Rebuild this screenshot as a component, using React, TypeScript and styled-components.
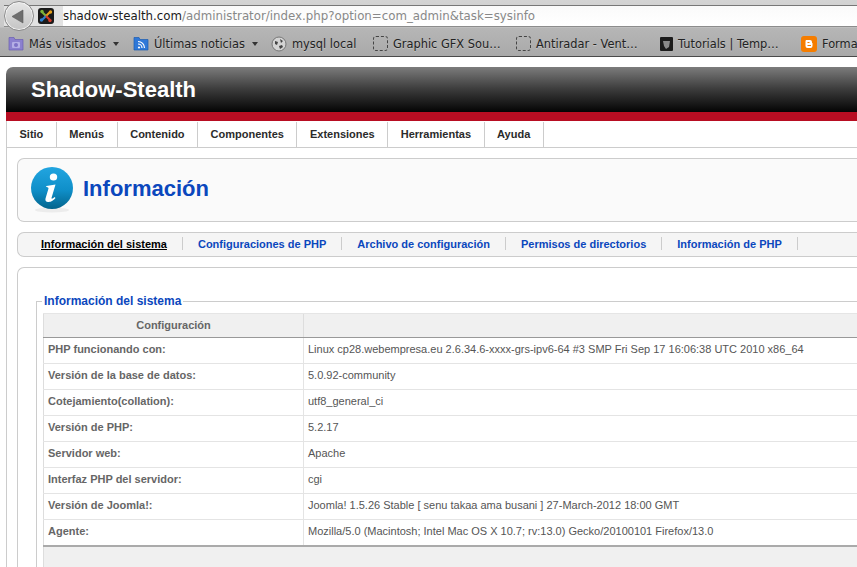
import React from 'react';
import styled, { createGlobalStyle } from 'styled-components';

const GlobalStyle = createGlobalStyle`
  html, body {
    margin: 0;
    padding: 0;
    width: 857px;
    height: 567px;
    overflow: hidden;
    background: #fff;
    font-family: "Liberation Sans", Arial, sans-serif;
  }
  * { box-sizing: border-box; }
`;

const Chrome = styled.div`
  height: 57px;
  background: linear-gradient(#d4d4d4 0, #c8c8c8 27px, #b6b6b6 28px, #a9a9a9 56px);
  border-bottom: 1px solid #4a4a4a;
  display: flex;
  flex-direction: column;
  overflow: hidden;
`;

const AddressRow = styled.div`
  height: 27px;
  flex: none;
  display: flex;
  align-items: center;
  padding-left: 4px;
  position: relative;
`;

const BackButton = styled.div`
  position: absolute;
  left: 4px;
  top: 1px;
  width: 30px;
  height: 30px;
  border-radius: 50%;
  border: 1px solid #8a8a8a;
  box-shadow: inset 0 0 0 1px #f4f4f4;
  background: linear-gradient(#e6e6e6, #c4c4c4);
  display: flex;
  align-items: center;
  justify-content: center;
  padding-right: 3px;
  z-index: 1;
`;

const FaviconSlot = styled.div`
  width: 59px;
  height: 22px;
  flex: none;
  margin-top: 5px;
  padding: 2px 0 0 34px;
  background: #e2e2e2;
  border-top: 1px solid #777;
  border-bottom: 1px solid #8c8c8c;
`;

const UrlBar = styled.div`
  flex: 1;
  height: 22px;
  margin-top: 5px;
  display: flex;
  align-items: center;
  background: linear-gradient(#fafafa, #fff);
  border-top: 1px solid #777;
  border-bottom: 1px solid #8c8c8c;
  font-family: "DejaVu Sans", sans-serif;
  font-size: 11.8px;
  white-space: nowrap;
  color: #888;
`;

const Domain = styled.span`
  color: #1a1a1a;
`;

const BookmarkRow = styled.div`
  flex: 1;
  display: flex;
  align-items: center;
  padding: 4px 0 0 8px;
  white-space: nowrap;
  font-family: "DejaVu Sans", sans-serif;
  font-size: 11.4px;
  font-weight: 500;
  color: #222;
  text-shadow: 0 1px 0 rgba(255, 255, 255, 0.3);
`;

const Bookmark = styled.div<{ $w: number }>`
  width: ${(p) => p.$w}px;
  flex: none;
  display: flex;
  align-items: center;
  gap: 5px;
`;

const Caret = styled.span`
  width: 0;
  height: 0;
  margin-left: 2px;
  border-left: 3.5px solid transparent;
  border-right: 3.5px solid transparent;
  border-top: 4px solid #333;
`;

const Placeholder = styled.span`
  width: 15px;
  height: 15px;
  flex: none;
  border: 1px dashed #444;
  border-radius: 3px;
`;

const Page = styled.div`
  padding: 10px 0 0 6px;
`;

const Banner = styled.div`
  height: 54px;
  border-top-left-radius: 7px;
  background: linear-gradient(#7c7c7c 0, #3c3c3c 22px, #040404 45px);
  border-bottom: 9px solid #b80d22;
  padding: 10px 0 0 25px;
  color: #fff;
  font-size: 22px;
  font-weight: 700;
  line-height: 26px;
`;

const Shell = styled.div`
  border-left: 1px solid #ccc;
`;

const Nav = styled.nav`
  height: 27px;
  display: flex;
  border-top: 1px solid #fff;
  border-bottom: 1px solid #ccc;
`;

const NavItem = styled.div`
  padding: 0 12.5px 2px;
  display: flex;
  align-items: center;
  border-right: 1px solid #ccc;
  font-size: 11px;
  font-weight: 700;
  color: #2b2b2b;
`;

const Content = styled.div`
  padding: 10px 0 0 10px;
`;

const TitleBox = styled.div`
  height: 64px;
  display: flex;
  align-items: center;
  padding: 0 0 0 13px;
  gap: 10px;
  border: 1px solid #ccc;
  border-right: 0;
  border-radius: 7px 0 0 7px;
  background: #fafafa;
`;

const Title = styled.h1`
  margin: 0 0 3px;
  font-size: 22px;
  line-height: 26px;
  font-weight: 700;
  color: #0b47bd;
`;

const TabBar = styled.div`
  height: 25px;
  margin-top: 10px;
  display: flex;
  align-items: center;
  padding-left: 23px;
  border: 1px solid #ccc;
  border-right: 0;
  border-radius: 7px 0 0 7px;
  background: #f5f5f5;
`;

const Tab = styled.a<{ $active?: boolean }>`
  height: 13px;
  display: flex;
  align-items: center;
  padding-right: 15px;
  margin: 0 15px 2px 0;
  border-right: 1px solid #ccc;
  font-size: 11px;
  font-weight: 700;
  white-space: nowrap;
  color: ${(p) => (p.$active ? '#000' : '#0b47bd')};
  text-decoration: ${(p) => (p.$active ? 'underline' : 'none')};
`;

const Panel = styled.div`
  margin-top: 10px;
  height: 320px;
  padding: 26px 0 0 18px;
  border: 1px solid #ccc;
  border-right: 0;
  border-bottom: 0;
  border-top-left-radius: 7px;
`;

const Field = styled.fieldset`
  margin: 0;
  padding: 5px 0 0 6px;
  min-width: 0;
  border: 1px solid #ccc;
  border-right: 0;
  border-bottom: 0;
`;

const Legend = styled.legend`
  padding: 0 2px;
  margin-left: -1px;
  font-size: 12px;
  line-height: 14px;
  font-weight: 700;
  color: #0b47bd;
`;

const Table = styled.table`
  width: 814px;
  border-collapse: collapse;
  table-layout: fixed;
  font-size: 11px;
  color: #555;
`;

const HeadCell = styled.th`
  height: 24px;
  padding: 0 0 1px;
  background: #f0f0f0;
  border-top: 1px solid #e5e5e5;
  border-left: 1px solid #ddd;
  border-bottom: 1px solid #999;
  color: #666;
  font-weight: 700;
  text-align: center;
`;

const LabelCell = styled.td`
  height: 26px;
  padding: 0 4px 4px;
  border-left: 1px solid #ddd;
  border-bottom: 1px solid #e4e4e4;
  font-weight: 700;
  color: #666;
  white-space: nowrap;
`;

const ValueCell = styled.td`
  padding: 0 4px 4px;
  border-left: 1px solid #e4e4e4;
  border-bottom: 1px solid #e4e4e4;
  white-space: nowrap;
`;

const LastRow = styled.tr`
  td {
    padding-bottom: 2px;
    border-bottom: 2px solid #aaa;
  }
`;

const Footer = styled.td`
  height: 24px;
  background: #f0f0f0;
  border-left: 1px solid #ddd;
`;

const rows: [string, string][] = [
  ['PHP funcionando con:', 'Linux cp28.webempresa.eu 2.6.34.6-xxxx-grs-ipv6-64 #3 SMP Fri Sep 17 16:06:38 UTC 2010 x86_64'],
  ['Versión de la base de datos:', '5.0.92-community'],
  ['Cotejamiento(collation):', 'utf8_general_ci'],
  ['Versión de PHP:', '5.2.17'],
  ['Servidor web:', 'Apache'],
  ['Interfaz PHP del servidor:', 'cgi'],
  ['Versión de Joomla!:', 'Joomla! 1.5.26 Stable [ senu takaa ama busani ] 27-March-2012 18:00 GMT'],
];

const tabs = ['Configuraciones de PHP', 'Archivo de configuración', 'Permisos de directorios', 'Información de PHP'];
const menu = ['Sitio', 'Menús', 'Contenido', 'Componentes', 'Extensiones', 'Herramientas', 'Ayuda'];

const BackIcon = () => (
  <svg width="13" height="15" viewBox="0 0 13 15">
    <path d="M12 1v13L1 7.5z" fill="#6e6e6e" stroke="#5a5a5a" strokeWidth="0.6" />
  </svg>
);

const JoomlaIcon = () => (
  <svg width="16" height="16" viewBox="0 0 16 16">
    <rect width="16" height="16" rx="3" fill="#1b1b1b" />
    <path d="M4 4l4 4" stroke="#7db33a" strokeWidth="2.2" />
    <path d="M12 4L8 8" stroke="#e8a21c" strokeWidth="2.2" />
    <path d="M4 12l4-4" stroke="#2c7fd0" strokeWidth="2.2" />
    <path d="M12 12L8 8" stroke="#d23b2a" strokeWidth="2.2" />
    <circle cx="4" cy="3.5" r="1.7" fill="#7db33a" />
    <circle cx="12.5" cy="4" r="1.7" fill="#e8a21c" />
    <circle cx="3.5" cy="12" r="1.7" fill="#2c7fd0" />
    <circle cx="12" cy="12.5" r="1.7" fill="#d23b2a" />
  </svg>
);

const FolderIcon = () => (
  <svg width="16" height="15" viewBox="0 0 16 15">
    <path d="M1 1.5h5l1 2h8v10.500H1z" fill="#8b80cf" stroke="#6a5fb0" strokeWidth="0.7" />
    <rect x="4" y="6" width="8" height="6" rx="1" fill="#b5aee6" />
    <circle cx="8" cy="9" r="2" fill="#7d71c6" />
  </svg>
);

const RssFolderIcon = () => (
  <svg width="16" height="15" viewBox="0 0 16 15">
    <path d="M1 1.5h5l1 2h8v10.500H1z" fill="#2f78d8" stroke="#1d5bb0" strokeWidth="0.7" />
    <circle cx="6" cy="11.5" r="1.1" fill="#fff" />
    <path d="M5 8a4 4 0 0 1 4 4M5 5.500A6.500 6.500 0 0 1 11.5 12" fill="none" stroke="#fff" strokeWidth="1.2" />
  </svg>
);

const GlobeIcon = () => (
  <svg width="16" height="16" viewBox="0 0 16 16">
    <circle cx="8" cy="8" r="7" fill="#d4d4d4" stroke="#777" />
    <path d="M4 5l3 1-1 3-2-1zM9 3l3 2-2 2zM8 10l3-1 1 2-3 2z" fill="#444" />
  </svg>
);

const TutorialsIcon = () => (
  <svg width="13" height="14" viewBox="0 0 13 14">
    <rect width="13" height="14" rx="1" fill="#1c1c1c" />
    <path d="M3 4h7l-1 6-3 2-2-3z" fill="#8a8a8a" />
  </svg>
);

const BloggerIcon = () => (
  <svg width="16" height="16" viewBox="0 0 16 16">
    <rect width="16" height="16" rx="3" fill="#f57d00" />
    <path d="M5 4h4a2 2 0 0 1 2 2v1h.5v3a2 2 0 0 1-2 2H6.500a2 2 0 0 1-2-2V5z" fill="#fff" />
    <path d="M6.500 6.500h2M6.500 9.500h3.500" stroke="#f57d00" strokeWidth="1.2" />
  </svg>
);

const InfoIcon = () => (
  <svg width="42" height="46" viewBox="0 0 42 46">
    <defs>
      <linearGradient id="infoFill" x1="0" y1="0" x2="0" y2="1">
        <stop offset="0" stopColor="#22a5e0" />
        <stop offset="0.55" stopColor="#0f8fc9" />
        <stop offset="1" stopColor="#03648c" />
      </linearGradient>
    </defs>
    <ellipse cx="21" cy="43" rx="17" ry="2.500" fill="#ececec" />
    <circle cx="21" cy="21" r="21" fill="url(#infoFill)" />
    <ellipse cx="22.5" cy="10" rx="3.7" ry="3.5" fill="#fff" />
    <path d="M15.5 19l9-1.500-4 13.500c0 1 1 1 3-1l1 1c-3 3.500-5 4-7.500 4-2 0-3-1.500-2.500-3.500l3-10c0-1-1-1.500-2.500-1.500z" fill="#fff" />
  </svg>
);

const App = () => (
  <>
    <GlobalStyle />
    <Chrome>
      <AddressRow>
        <BackButton><BackIcon /></BackButton>
        <FaviconSlot><JoomlaIcon /></FaviconSlot>
        <UrlBar>
          <Domain>shadow-stealth.com</Domain>/administrator/index.php?option=com_admin&amp;task=sysinfo
        </UrlBar>
      </AddressRow>
      <BookmarkRow>
        <Bookmark $w={125}><FolderIcon />Más visitados<Caret /></Bookmark>
        <Bookmark $w={138}><RssFolderIcon />Últimas noticias<Caret /></Bookmark>
        <Bookmark $w={102}><GlobeIcon />mysql local</Bookmark>
        <Bookmark $w={143}><Placeholder />Graphic GFX Sou…</Bookmark>
        <Bookmark $w={144}><Placeholder />Antiradar - Vent…</Bookmark>
        <Bookmark $w={141}><TutorialsIcon />Tutorials | Temp…</Bookmark>
        <Bookmark $w={80}><BloggerIcon />Forma</Bookmark>
      </BookmarkRow>
    </Chrome>
    <Page>
      <Banner>Shadow-Stealth</Banner>
      <Shell>
        <Nav>
          {menu.map((m) => <NavItem key={m}>{m}</NavItem>)}
        </Nav>
        <Content>
          <TitleBox>
            <InfoIcon />
            <Title>Información</Title>
          </TitleBox>
          <TabBar>
            <Tab $active>Información del sistema</Tab>
            {tabs.map((t) => <Tab key={t}>{t}</Tab>)}
          </TabBar>
          <Panel>
            <Field>
              <Legend>Información del sistema</Legend>
              <Table>
                <colgroup>
                  <col style={{ width: 260 }} />
                  <col />
                </colgroup>
                <thead>
                  <tr>
                    <HeadCell>Configuración</HeadCell>
                    <HeadCell />
                  </tr>
                </thead>
                <tbody>
                  {rows.map(([k, v]) => (
                    <tr key={k}>
                      <LabelCell>{k}</LabelCell>
                      <ValueCell>{v}</ValueCell>
                    </tr>
                  ))}
                  <LastRow>
                    <LabelCell>Agente:</LabelCell>
                    <ValueCell>Mozilla/5.0 (Macintosh; Intel Mac OS X 10.7; rv:13.0) Gecko/20100101 Firefox/13.0</ValueCell>
                  </LastRow>
                  <tr>
                    <Footer colSpan={2} />
                  </tr>
                </tbody>
              </Table>
            </Field>
          </Panel>
        </Content>
      </Shell>
    </Page>
  </>
);

export default App;
